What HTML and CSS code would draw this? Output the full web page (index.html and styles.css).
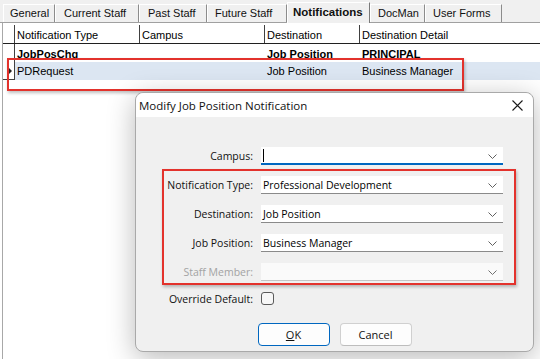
FILE: index.html
```html
<!DOCTYPE html>
<html lang="en">
<head>
  <meta charset="UTF-8">
  <title>Notifications</title>
  <link rel="stylesheet" href="styles.css">
</head>
<body>
  <div class="window">
    <div class="tabs">
      <div class="tab t-general">General</div>
      <div class="tab t-current">Current Staff</div>
      <div class="tab t-past">Past Staff</div>
      <div class="tab t-future">Future Staff</div>
      <div class="tab t-notif active">Notifications</div>
      <div class="tab t-docman">DocMan</div>
      <div class="tab t-forms">User Forms</div>
    </div>

    <div class="grid">
      <div class="grid-row head">
        <div class="cell ind"></div>
        <div class="cell">Notification Type</div>
        <div class="cell">Campus</div>
        <div class="cell">Destination</div>
        <div class="cell">Destination Detail</div>
      </div>
      <div class="grid-row bold">
        <div class="cell ind"></div>
        <div class="cell">JobPosChg</div>
        <div class="cell"></div>
        <div class="cell">Job Position</div>
        <div class="cell">PRINCIPAL</div>
      </div>
      <div class="grid-row selected">
        <div class="cell ind"><span class="arrow"></span></div>
        <div class="cell">PDRequest</div>
        <div class="cell"></div>
        <div class="cell">Job Position</div>
        <div class="cell">Business Manager</div>
      </div>
    </div>

    <div class="mark mark-row"></div>

    <div class="dialog">
      <div class="dialog-title">
        <span>Modify Job Position Notification</span>
        <svg class="close" width="11" height="11" viewBox="0 0 11 11">
          <path d="M0.5 0.5 L10.5 10.5 M10.5 0.5 L0.5 10.5" stroke="#1a1a1a" stroke-width="1.1" fill="none"/>
        </svg>
      </div>

      <div class="dialog-body">
        <div class="form">
          <label>Campus:</label>
          <div class="combo focused">
            <span class="caret"></span>
            <svg class="chev" width="9" height="5" viewBox="0 0 9 5"><path d="M0.5 0.5 L4.5 4.5 L8.5 0.5" stroke="#606060" fill="none"/></svg>
          </div>

          <label>Notification Type:</label>
          <div class="combo">
            <span class="value">Professional Development</span>
            <svg class="chev" width="9" height="5" viewBox="0 0 9 5"><path d="M0.5 0.5 L4.5 4.5 L8.5 0.5" stroke="#606060" fill="none"/></svg>
          </div>

          <label>Destination:</label>
          <div class="combo">
            <span class="value">Job Position</span>
            <svg class="chev" width="9" height="5" viewBox="0 0 9 5"><path d="M0.5 0.5 L4.5 4.5 L8.5 0.5" stroke="#606060" fill="none"/></svg>
          </div>

          <label>Job Position:</label>
          <div class="combo">
            <span class="value">Business Manager</span>
            <svg class="chev" width="9" height="5" viewBox="0 0 9 5"><path d="M0.5 0.5 L4.5 4.5 L8.5 0.5" stroke="#606060" fill="none"/></svg>
          </div>

          <label class="disabled">Staff Member:</label>
          <div class="combo disabled">
            <span class="value"></span>
            <svg class="chev" width="9" height="5" viewBox="0 0 9 5"><path d="M0.5 0.5 L4.5 4.5 L8.5 0.5" stroke="#707070" fill="none"/></svg>
          </div>

          <label>Override Default:</label>
          <div class="check-cell"><span class="checkbox"></span></div>
        </div>

        <div class="buttons">
          <button class="btn default"><u>O</u>K</button>
          <button class="btn">Cancel</button>
        </div>

        <div class="mark mark-form"></div>
      </div>
    </div>
  </div>
</body>
</html>
```

FILE: styles.css
```css
* {
  box-sizing: border-box;
}

body {
  margin: 0;
  width: 540px;
  height: 359px;
  overflow: hidden;
  background: #fff;
  font-family: "Liberation Sans", Arial, sans-serif;
  font-size: 11px;
  color: #000;
}

.window {
  position: relative;
  height: 100%;
}

/* tab strip */
.tabs {
  display: flex;
  align-items: flex-end;
  height: 23px;
  padding-left: 3px;
  background: #f0f0f0;
  border-bottom: 1px solid #a0a0a0;
}

.tab {
  height: 18px;
  line-height: 16px;
  padding-left: 6px;
  border-left: 1px solid #fff;
  border-right: 1px solid #8c8c8c;
  border-top: 1px solid #fff;
  color: #111;
}

.t-general { width: 52px; }
.t-current { width: 84px; padding-left: 8px; }
.t-past    { width: 68px; padding-left: 8px; }
.t-future  { width: 80px; padding-left: 7px; }
.t-docman  { width: 55px; padding-left: 7px; }
.t-forms   { width: 77px; padding-left: 7px; }

.tab.active {
  width: 83px;
  height: 21px;
  margin-bottom: -1px;
  padding-left: 5px;
  line-height: 19px;
  font-size: 11.5px;
  font-weight: bold;
  background: #f0f0f0;
  border-left: 1px solid #fff;
  border-right: 1px solid #7a7a7a;
}

/* data grid */
.grid {
  height: calc(100% - 23px);
  margin-left: 2px;
  padding-top: 2px;
  border-left: 1px solid #a8a8a8;
  background: #fff;
}

.grid-row {
  display: grid;
  grid-template-columns: 12px 125px 125px 95px 1fr;
  height: 18px;
  line-height: 18px;
}

.grid-row .cell {
  padding-left: 2px;
  white-space: nowrap;
  overflow: hidden;
}

.grid-row.head {
  height: 19px;
  line-height: 20px;
  border-bottom: 1px solid #202020;
}

.grid-row.head .cell {
  border-right: 1px solid #404040;
}

.grid-row.head .cell:last-child {
  border-right: none;
}

.grid-row .ind {
  border-right: 1px solid #404040;
  padding: 0;
}

.grid-row.bold {
  font-weight: bold;
  line-height: 20px;
}

.grid-row.selected {
  background: #dce6f2;
}

.grid-row.selected .ind {
  background: #fff;
  border-bottom: 1px solid #404040;
  position: relative;
}

.arrow {
  position: absolute;
  left: 5px;
  top: 5px;
  border-top: 4px solid transparent;
  border-bottom: 4px solid transparent;
  border-left: 4px solid #222;
}

/* red annotation boxes */
.mark {
  position: absolute;
  border: 2px solid #e3322c;
  box-shadow: 1px 2px 3px rgba(0, 0, 0, 0.25);
  pointer-events: none;
}

.mark-row {
  left: 7px;
  top: 58px;
  width: 457px;
  height: 33px;
}

/* dialog */
.dialog {
  position: absolute;
  left: 135px;
  top: 92px;
  width: 399px;
  height: 260px;
  border: 1px solid #a9a9a9;
  border-radius: 8px;
  background: #f0f0f0;
  box-shadow: 0 6px 28px rgba(0, 0, 0, 0.28);
  font-family: "Open Sans", "Noto Sans", sans-serif;
  font-size: 10.5px;
}

.dialog-title {
  display: flex;
  align-items: center;
  justify-content: space-between;
  height: 24px;
  padding: 0 10px 0 3px;
  background: #fff;
  border-radius: 8px 8px 0 0;
  font-size: 11.5px;
  color: #111;
}

.dialog-body {
  position: relative;
  padding-top: 30px;
}

.form {
  display: grid;
  grid-template-columns: 117px 242px;
  grid-template-rows: repeat(5, 18px) 13px;
  column-gap: 8px;
  row-gap: 11px;
  align-items: center;
}

.form label {
  text-align: right;
  color: #111;
}

.form label.disabled {
  color: #a3a3a3;
}

.combo {
  position: relative;
  display: flex;
  align-items: center;
  height: 18px;
  padding-left: 2px;
  background: #fff;
  border-bottom: 1px solid #8a8a8a;
}

.combo.focused {
  border-bottom: 2px solid #0067c0;
}

.combo.disabled {
  background: #fafafa;
  border-bottom-color: #c4c4c4;
}

.caret {
  width: 1px;
  height: 13px;
  background: #000;
}

.chev {
  position: absolute;
  right: 6px;
  top: 7px;
}

.check-cell {
  display: flex;
  align-items: center;
}

.checkbox {
  width: 13px;
  height: 13px;
  border: 1px solid #5a5a5a;
  border-radius: 3px;
  background: #f7f7f7;
}

.buttons {
  display: flex;
  justify-content: center;
  gap: 10px;
  margin-top: 18px;
}

.btn {
  width: 72px;
  height: 23px;
  padding: 0;
  font: inherit;
  font-size: 11px;
  color: #111;
  background: #fdfdfd;
  border: 1px solid #d0d0d0;
  border-bottom-color: #bdbdbd;
  border-radius: 4px;
}

.btn.default {
  border: 1px solid #0067c0;
}

.mark-form {
  left: 26px;
  top: 52px;
  width: 354px;
  height: 116px;
}
```
